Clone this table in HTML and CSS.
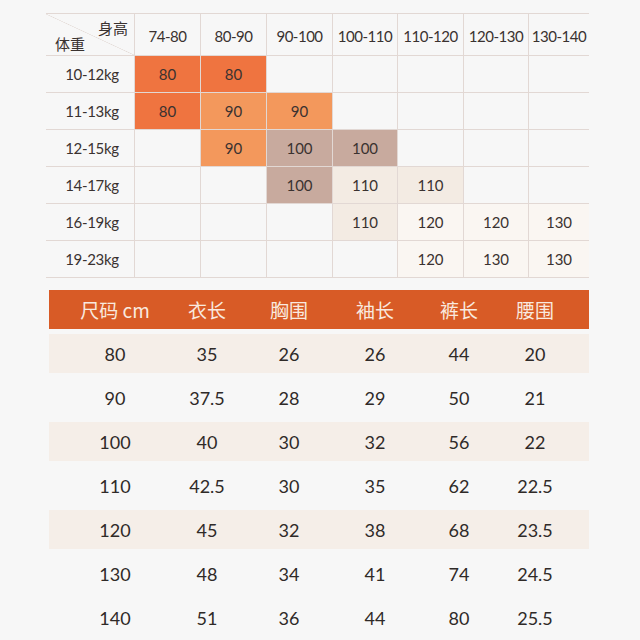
FILE: index.html
```html
<!DOCTYPE html>
<html lang="zh">
<head>
<meta charset="utf-8">
<title>尺码表</title>
<link rel="stylesheet" href="styles.css">
</head>
<body>
<div class="page">
  <div class="grid">
    <div class="cell corner"><span class="c-h">身高</span><span class="c-w">体重</span></div>
    <div class="cell hd">74-80</div>
    <div class="cell hd">80-90</div>
    <div class="cell hd">90-100</div>
    <div class="cell hd">100-110</div>
    <div class="cell hd">110-120</div>
    <div class="cell hd">120-130</div>
    <div class="cell hd">130-140</div>

    <div class="cell lb">10-12kg</div>
    <div class="cell c1">80</div>
    <div class="cell c1">80</div>
    <div class="cell"></div>
    <div class="cell"></div>
    <div class="cell"></div>
    <div class="cell"></div>
    <div class="cell"></div>

    <div class="cell lb">11-13kg</div>
    <div class="cell c1">80</div>
    <div class="cell c2">90</div>
    <div class="cell c2">90</div>
    <div class="cell"></div>
    <div class="cell"></div>
    <div class="cell"></div>
    <div class="cell"></div>

    <div class="cell lb">12-15kg</div>
    <div class="cell"></div>
    <div class="cell c2">90</div>
    <div class="cell c3">100</div>
    <div class="cell c3">100</div>
    <div class="cell"></div>
    <div class="cell"></div>
    <div class="cell"></div>

    <div class="cell lb">14-17kg</div>
    <div class="cell"></div>
    <div class="cell"></div>
    <div class="cell c3">100</div>
    <div class="cell c4">110</div>
    <div class="cell c4">110</div>
    <div class="cell"></div>
    <div class="cell"></div>

    <div class="cell lb">16-19kg</div>
    <div class="cell"></div>
    <div class="cell"></div>
    <div class="cell"></div>
    <div class="cell c4">110</div>
    <div class="cell c5">120</div>
    <div class="cell c5">120</div>
    <div class="cell c5">130</div>

    <div class="cell lb">19-23kg</div>
    <div class="cell"></div>
    <div class="cell"></div>
    <div class="cell"></div>
    <div class="cell"></div>
    <div class="cell c5">120</div>
    <div class="cell c5">130</div>
    <div class="cell c5">130</div>
  </div>

  <div class="sizes">
    <div class="row head">
      <span>尺码 cm</span><span>衣长</span><span>胸围</span><span>袖长</span><span>裤长</span><span>腰围</span>
    </div>
    <div class="row band"><span>80</span><span>35</span><span>26</span><span>26</span><span>44</span><span>20</span></div>
    <div class="row"><span>90</span><span>37.5</span><span>28</span><span>29</span><span>50</span><span>21</span></div>
    <div class="row band"><span>100</span><span>40</span><span>30</span><span>32</span><span>56</span><span>22</span></div>
    <div class="row"><span>110</span><span>42.5</span><span>30</span><span>35</span><span>62</span><span>22.5</span></div>
    <div class="row band"><span>120</span><span>45</span><span>32</span><span>38</span><span>68</span><span>23.5</span></div>
    <div class="row"><span>130</span><span>48</span><span>34</span><span>41</span><span>74</span><span>24.5</span></div>
    <div class="row"><span>140</span><span>51</span><span>36</span><span>44</span><span>80</span><span>25.5</span></div>
  </div>
</div>
</body>
</html>
```
FILE: styles.css
```css
html, body {
  margin: 0;
  padding: 0;
  background: #f7f7f7;
}
body {
  font-family: Lato, "Noto Sans CJK SC", sans-serif;
  color: #342d2a;
}
.page {
  width: 640px;
  height: 640px;
  overflow: hidden;
  padding-top: 13px;
  box-sizing: border-box;
}

/* top weight / height grid */
.grid {
  margin-left: 46px;
  width: 543px;
  display: grid;
  grid-template-columns: 88px 66px 66px 66px 65px 66px 65px 61px;
  grid-template-rows: 42px repeat(6, 37px);
  border-top: 1px solid #e2d8d4;
}
.cell {
  box-sizing: border-box;
  border-bottom: 1px solid #e2d8d4;
  border-left: 1px solid #e2d8d4;
  display: flex;
  align-items: center;
  justify-content: center;
  font-size: 15px;
  color: #3a3230;
}
.cell.lb, .cell.corner {
  border-left: none;
}
.cell.lb {
  font-size: 15px;
  letter-spacing: -0.3px;
  padding-left: 4px;
}
.cell.hd {
  font-size: 15px;
  letter-spacing: -0.5px;
  padding-top: 2px;
}
.corner {
  flex-direction: column;
  align-items: stretch;
  justify-content: center;
  background: linear-gradient(to bottom left, transparent calc(50% - 0.6px), #e4dcd8 50%, transparent calc(50% + 0.6px));
  font-family: "Noto Sans CJK SC", sans-serif;
  font-size: 15px;
  line-height: 16px;
  padding-top: 2px;
}
.c-h {
  align-self: flex-end;
  padding-right: 6px;
}
.c-w {
  align-self: flex-start;
  padding-left: 9px;
}
.c1 { background: #ef7440; }
.c2 { background: #f3985c; }
.c3 { background: #c8aa9e; }
.c4 { background: #f3ebe3; }
.c5 { background: #faf6f2; }

/* bottom measurement table */
.sizes {
  margin-top: 12px;
  margin-left: 49px;
  width: 540px;
}
.row {
  display: grid;
  grid-template-columns: 92px 92px 72px 100px 68px 84px;
  padding-left: 20px;
  height: 39px;
  margin-top: 5px;
  align-items: center;
  font-size: 18px;
  color: #2f2a28;
}
.row span {
  text-align: center;
}
.row.head {
  margin-top: 0;
  background: #d85b26;
  color: #f9e9df;
  font-family: "Noto Sans CJK SC", sans-serif;
  font-size: 19px;
}
.row.band {
  background: #f5eee8;
}
```
